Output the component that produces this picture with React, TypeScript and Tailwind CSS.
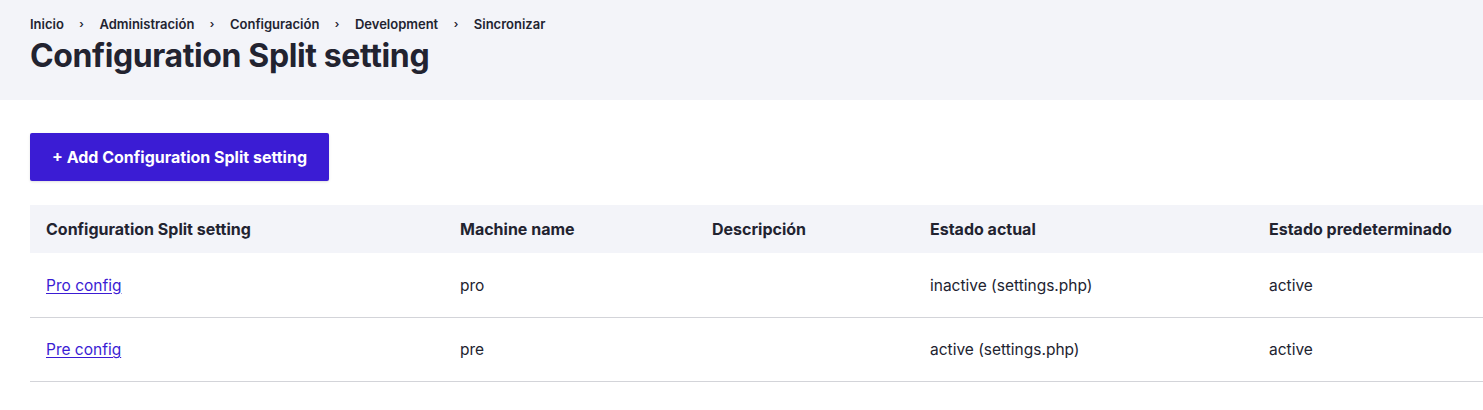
import React from 'react';

const crumbs = ['Inicio', 'Administración', 'Configuración', 'Development', 'Sincronizar'];

const rows = [
  { label: 'Pro config', machine: 'pro', description: '', current: 'inactive (settings.php)', fallback: 'active' },
  { label: 'Pre config', machine: 'pre', description: '', current: 'active (settings.php)', fallback: 'active' },
];

function App() {
  return (
    <div className="min-h-screen bg-white text-[#222330] font-['Inter',sans-serif]">
      <header className="bg-[#f3f4f9] px-[30px] pt-[16px] h-[100px]">
        <nav className="flex items-center text-[13px] font-semibold leading-4">
          {crumbs.map((c, i) => (
            <React.Fragment key={c}>
              {i > 0 && <span className="px-[15.5px] text-[11px]">›</span>}
              <a href="#" className="text-[#222330]">{c}</a>
            </React.Fragment>
          ))}
        </nav>
        <h1 className="mt-[4px] text-[32px] font-bold leading-[40px] tracking-[-0.012em]">
          Configuration Split setting
        </h1>
      </header>

      <main className="pl-[30px] pt-[33px]">
        <button className="h-[48px] px-[22px] rounded-[2px] bg-[#3b1cd4] text-white text-[16px] font-bold shadow-sm">
          + Add Configuration Split setting
        </button>

        <table className="mt-[24px] w-[1453px] table-fixed border-collapse text-[15.5px]">
          <colgroup>
            <col className="w-[414px]" />
            <col className="w-[252px]" />
            <col className="w-[218px]" />
            <col className="w-[339px]" />
            <col className="w-[230px]" />
          </colgroup>
          <thead>
            <tr className="bg-[#f3f4f9] h-[48px] text-left">
              <th className="px-4 font-bold text-[16px]">Configuration Split setting</th>
              <th className="px-4 font-bold text-[16px]">Machine name</th>
              <th className="px-4 font-bold text-[16px]">Descripción</th>
              <th className="px-4 font-bold text-[16px]">Estado actual</th>
              <th className="px-4 font-bold text-[16px]">Estado predeterminado</th>
            </tr>
          </thead>
          <tbody>
            {rows.map((r) => (
              <tr key={r.machine} className="h-[64px] border-b border-[#d3d4d9]">
                <td className="px-4 pt-[2px]">
                  <a href="#" className="text-[#3b1cd4] underline underline-offset-2">{r.label}</a>
                </td>
                <td className="px-4 pt-[2px]">{r.machine}</td>
                <td className="px-4 pt-[2px]">{r.description}</td>
                <td className="px-4 pt-[2px]">{r.current}</td>
                <td className="px-4 pt-[2px]">{r.fallback}</td>
              </tr>
            ))}
          </tbody>
        </table>
      </main>
    </div>
  );
}

export default App;
